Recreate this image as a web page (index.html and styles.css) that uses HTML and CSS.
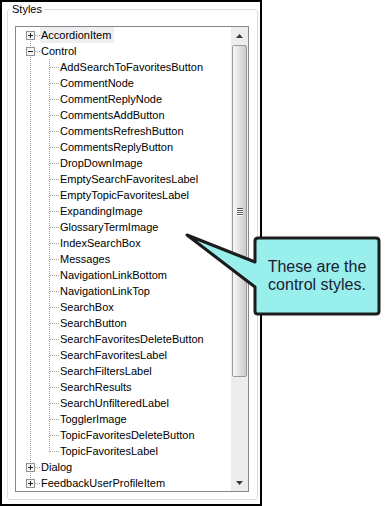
FILE: index.html
```html
<!DOCTYPE html>
<html>
    <head>
        <title>Styles</title>
        <meta name="viewport" content="width=device-width">
        <link rel="stylesheet" href="styles.css">
    </head>
    <body>
        <div class="shot">
            <fieldset class="group">
                <legend>Styles</legend>

                <div class="listbox">
                    <div class="tree">
                        <div class="row"><span class="rail rail-start"><svg class="box" width="9" height="9"><rect x="0.5" y="0.5" width="8" height="8"/><path d="M2 4.5h5M4.5 2v5"/></svg></span><span class="label hot">AccordionItem</span></div>
                        <div class="row"><span class="rail rail-tee"><svg class="box" width="9" height="9"><rect x="0.5" y="0.5" width="8" height="8"/><path d="M2 4.5h5"/></svg></span><span class="label">Control</span></div>
                        <div class="row"><span class="rail rail-pass"></span><span class="rail rail-tee"></span><span class="label">AddSearchToFavoritesButton</span></div>
                        <div class="row"><span class="rail rail-pass"></span><span class="rail rail-tee"></span><span class="label">CommentNode</span></div>
                        <div class="row"><span class="rail rail-pass"></span><span class="rail rail-tee"></span><span class="label">CommentReplyNode</span></div>
                        <div class="row"><span class="rail rail-pass"></span><span class="rail rail-tee"></span><span class="label">CommentsAddButton</span></div>
                        <div class="row"><span class="rail rail-pass"></span><span class="rail rail-tee"></span><span class="label">CommentsRefreshButton</span></div>
                        <div class="row"><span class="rail rail-pass"></span><span class="rail rail-tee"></span><span class="label">CommentsReplyButton</span></div>
                        <div class="row"><span class="rail rail-pass"></span><span class="rail rail-tee"></span><span class="label">DropDownImage</span></div>
                        <div class="row"><span class="rail rail-pass"></span><span class="rail rail-tee"></span><span class="label">EmptySearchFavoritesLabel</span></div>
                        <div class="row"><span class="rail rail-pass"></span><span class="rail rail-tee"></span><span class="label">EmptyTopicFavoritesLabel</span></div>
                        <div class="row"><span class="rail rail-pass"></span><span class="rail rail-tee"></span><span class="label">ExpandingImage</span></div>
                        <div class="row"><span class="rail rail-pass"></span><span class="rail rail-tee"></span><span class="label">GlossaryTermImage</span></div>
                        <div class="row"><span class="rail rail-pass"></span><span class="rail rail-tee"></span><span class="label">IndexSearchBox</span></div>
                        <div class="row"><span class="rail rail-pass"></span><span class="rail rail-tee"></span><span class="label">Messages</span></div>
                        <div class="row"><span class="rail rail-pass"></span><span class="rail rail-tee"></span><span class="label">NavigationLinkBottom</span></div>
                        <div class="row"><span class="rail rail-pass"></span><span class="rail rail-tee"></span><span class="label">NavigationLinkTop</span></div>
                        <div class="row"><span class="rail rail-pass"></span><span class="rail rail-tee"></span><span class="label">SearchBox</span></div>
                        <div class="row"><span class="rail rail-pass"></span><span class="rail rail-tee"></span><span class="label">SearchButton</span></div>
                        <div class="row"><span class="rail rail-pass"></span><span class="rail rail-tee"></span><span class="label">SearchFavoritesDeleteButton</span></div>
                        <div class="row"><span class="rail rail-pass"></span><span class="rail rail-tee"></span><span class="label">SearchFavoritesLabel</span></div>
                        <div class="row"><span class="rail rail-pass"></span><span class="rail rail-tee"></span><span class="label">SearchFiltersLabel</span></div>
                        <div class="row"><span class="rail rail-pass"></span><span class="rail rail-tee"></span><span class="label">SearchResults</span></div>
                        <div class="row"><span class="rail rail-pass"></span><span class="rail rail-tee"></span><span class="label">SearchUnfilteredLabel</span></div>
                        <div class="row"><span class="rail rail-pass"></span><span class="rail rail-tee"></span><span class="label">TogglerImage</span></div>
                        <div class="row"><span class="rail rail-pass"></span><span class="rail rail-tee"></span><span class="label">TopicFavoritesDeleteButton</span></div>
                        <div class="row"><span class="rail rail-pass"></span><span class="rail rail-elbow"></span><span class="label">TopicFavoritesLabel</span></div>
                        <div class="row"><span class="rail rail-tee"><svg class="box" width="9" height="9"><rect x="0.5" y="0.5" width="8" height="8"/><path d="M2 4.5h5M4.5 2v5"/></svg></span><span class="label">Dialog</span></div>
                        <div class="row"><span class="rail rail-elbow"><svg class="box" width="9" height="9"><rect x="0.5" y="0.5" width="8" height="8"/><path d="M2 4.5h5M4.5 2v5"/></svg></span><span class="label">FeedbackUserProfileItem</span></div>
                    </div>

                    <div class="vscroll">
                        <div class="arrow"><svg width="7" height="4"><path d="M0 4h7L3.5 0z"/></svg></div>
                        <div class="thumb">
                            <div class="grip"><i></i><i></i><i></i><i></i></div>
                        </div>
                        <div class="track"></div>
                        <div class="arrow"><svg width="7" height="4"><path d="M0 0h7L3.5 4z"/></svg></div>
                    </div>
                </div>
            </fieldset>
        </div>

        <!-- annotation callout over the screenshot -->
        <div class="callout">
            <svg class="bubble" width="200" height="88" viewBox="184 232 200 88">
                <path d="M187 235L255 262V241Q255 238 258 238H376Q379 238 379 241V311Q379 314 376 314H258Q255 314 255 311V287Z"/>
            </svg>
            <div class="callout-text">These are the<br>control styles.</div>
        </div>
    </body>
</html>
```

FILE: styles.css
```css
body {
    margin: 0;
    background: #fff;
    color: #000;
    font-family: "Liberation Sans", Arial, sans-serif;
    font-size: 11px;
}

.shot {
    width: 262px;
    height: 506px;
    box-sizing: border-box;
    border: 2px solid #000;
    overflow: hidden;
}

.group {
    margin: 0 2px 0 5px;
    padding: 10px 8px 7px 7px;
    border: 1px solid #d5dfe5;
    border-radius: 3px;
    min-width: 0;
}

.group > legend {
    margin-left: -5px;
    padding: 0 2px;
    line-height: 14px;
    font-size: 11px;
}

.listbox {
    display: flex;
    border: 1px solid #828790;
    height: 464px;
}

.tree {
    --v: repeating-linear-gradient(to bottom, #a0a0a0 0 1px, transparent 1px 2px);
    --h: repeating-linear-gradient(to right, #a0a0a0 0 1px, transparent 1px 2px);
    flex: 1;
    padding-left: 5px;
    overflow: hidden;
}

.row {
    display: flex;
    height: 16px;
}

.rail {
    flex: none;
    width: 19px;
    height: 16px;
    background-repeat: no-repeat;
}

.rail-pass {
    background-image: var(--v);
    background-size: 1px 16px;
    background-position: 9px 0;
}

.rail-tee {
    background-image: var(--v), var(--h);
    background-size: 1px 16px, 9px 1px;
    background-position: 9px 0, 10px 8px;
}

.rail-elbow {
    background-image: var(--v), var(--h);
    background-size: 1px 9px, 9px 1px;
    background-position: 9px 0, 10px 8px;
}

.rail-start {
    background-image: var(--v), var(--h);
    background-size: 1px 8px, 9px 1px;
    background-position: 9px 8px, 10px 8px;
}

.box {
    display: block;
    margin: 4px 0 0 5px;
}

.box rect {
    fill: #f7f7f7;
    stroke: #919191;
}

.box path {
    stroke: #222;
    fill: none;
}

.label {
    padding: 0 3px 0 1px;
    line-height: 16px;
    white-space: nowrap;
}

.label.hot {
    background: #efefef;
}

.vscroll {
    flex: none;
    width: 17px;
    display: flex;
    flex-direction: column;
    background: #ededed;
}

.arrow {
    height: 17px;
    display: flex;
    align-items: center;
    justify-content: center;
}

.arrow svg {
    display: block;
    fill: #3a3a3a;
}

.thumb {
    height: 330px;
    margin: 1px 1px 0 1px;
    border: 1px solid #999;
    border-radius: 2px;
    background: linear-gradient(to right, #fafafa, #e4e4e4 45%, #c9c9c9);
    display: flex;
    align-items: center;
    justify-content: center;
}

.grip {
    display: flex;
    flex-direction: column;
    gap: 1px;
}

.grip i {
    display: block;
    width: 6px;
    height: 1px;
    background: #555;
    box-shadow: 0 1px 0 #fff;
}

.track {
    flex: 1;
}

.callout {
    position: absolute;
    left: 184px;
    top: 232px;
    width: 200px;
    height: 88px;
}

.bubble {
    display: block;
}

.bubble path {
    fill: #98efec;
    stroke: #1c1c1c;
    stroke-width: 3;
    stroke-linejoin: round;
}

.callout-text {
    position: absolute;
    left: 72px;
    top: 7px;
    width: 122px;
    height: 74px;
    display: flex;
    align-items: center;
    justify-content: center;
    text-align: center;
    font-size: 16px;
    line-height: 18px;
    color: #1a2030;
}
```
